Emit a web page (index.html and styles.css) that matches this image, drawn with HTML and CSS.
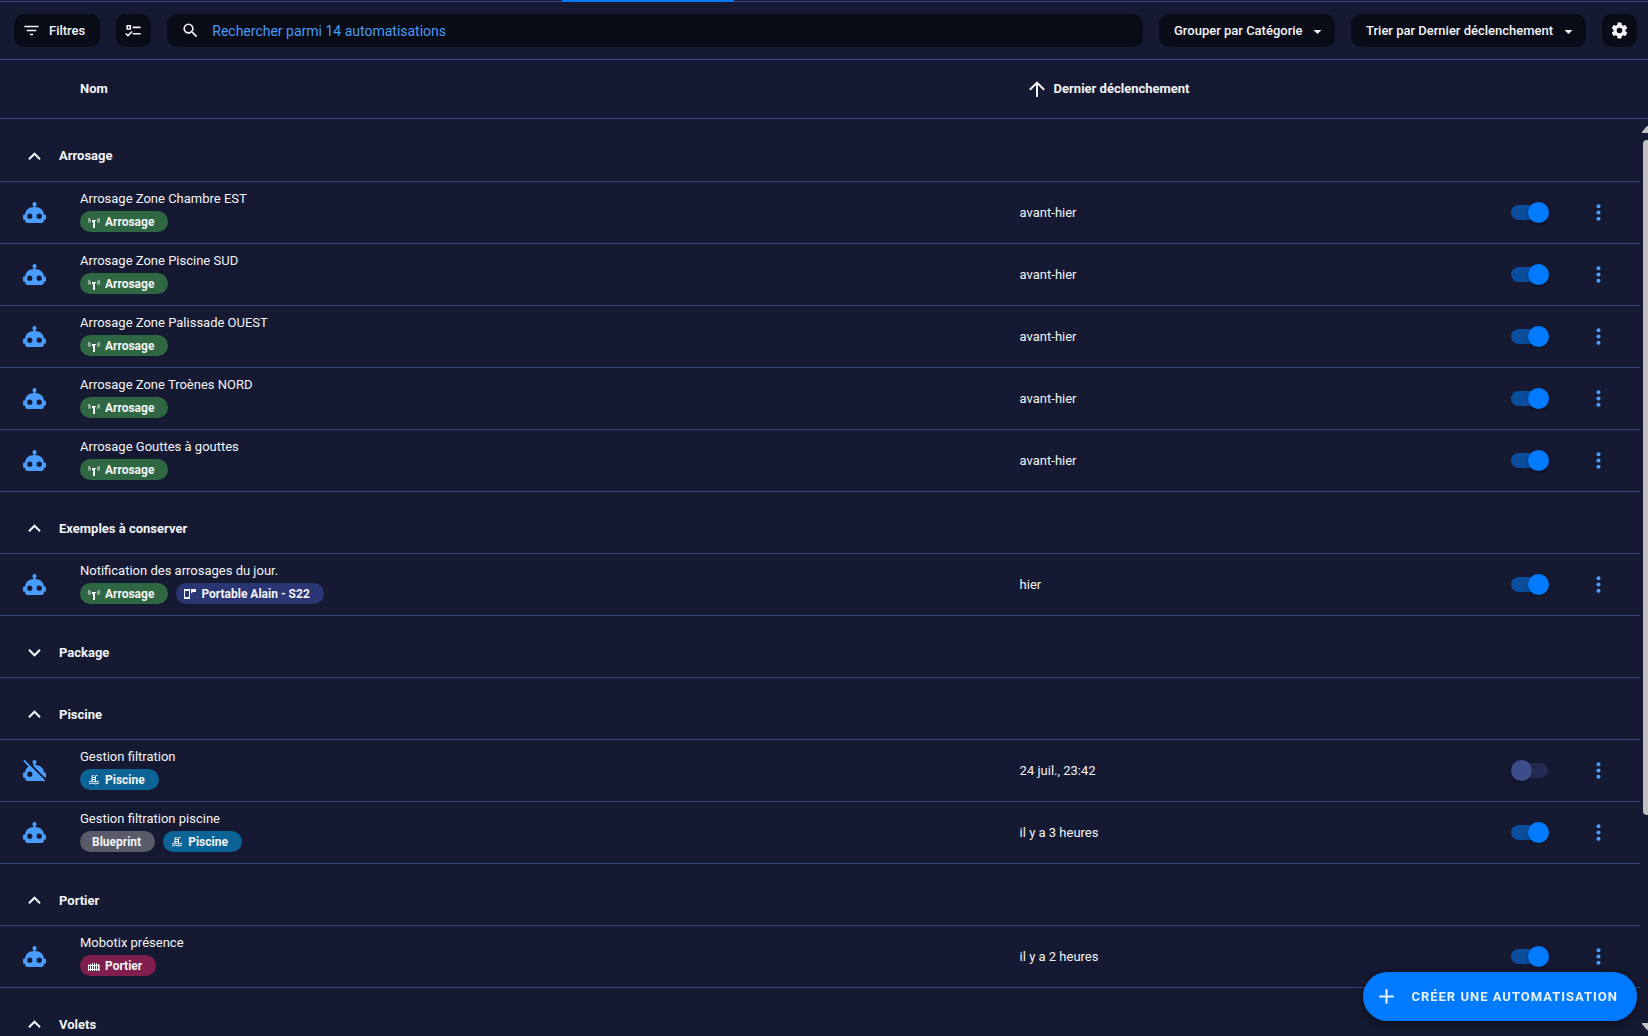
FILE: index.html
```
<!DOCTYPE html>
<html lang="fr">
<head>
    <meta charset="utf-8">
    <title>Automatisations</title>
    <link rel="stylesheet" href="styles.css">
</head>
<body>
    <!-- Shared icons -->
    <svg class="sprite" aria-hidden="true">
        <symbol id="robot" viewBox="0 0 24 24"><path d="M12,2A2,2 0 0,1 14,4C14,4.74 13.6,5.39 13,5.73V7H14A7,7 0 0,1 21,14H22A1,1 0 0,1 23,15V18A1,1 0 0,1 22,19H21V20A2,2 0 0,1 19,22H5A2,2 0 0,1 3,20V19H2A1,1 0 0,1 1,18V15A1,1 0 0,1 2,14H3A7,7 0 0,1 10,7H11V5.73C10.4,5.39 10,4.74 10,4A2,2 0 0,1 12,2M7.5,13A2.5,2.5 0 0,0 5,15.5A2.5,2.5 0 0,0 7.5,18A2.5,2.5 0 0,0 10,15.5A2.5,2.5 0 0,0 7.5,13M16.5,13A2.5,2.5 0 0,0 14,15.5A2.5,2.5 0 0,0 16.5,18A2.5,2.5 0 0,0 19,15.5A2.5,2.5 0 0,0 16.5,13Z"/></symbol>
        <symbol id="robot-off" viewBox="0 0 24 24"><path d="M23,15V18C23,18.5 22.64,18.88 22.17,18.97L10.2,7H11V5.73C10.4,5.39 10,4.74 10,4A2,2 0 0,1 14,4C14,4.74 13.6,5.39 13,5.73V7H14A7,7 0 0,1 21,14H22A1,1 0 0,1 23,15M22.11,21.46L20.84,22.73L19.89,21.78C19.62,21.92 19.32,22 19,22H5A2,2 0 0,1 3,20V19H2A1,1 0 0,1 1,18V15A1,1 0 0,1 2,14H3C3,11.53 4.29,9.36 6.22,8.11L1.11,3L2.39,1.73L22.11,21.46M10,15.5A2.5,2.5 0 0,0 7.5,13A2.5,2.5 0 0,0 5,15.5A2.5,2.5 0 0,0 7.5,18A2.5,2.5 0 0,0 10,15.5Z"/></symbol>
        <symbol id="chevron-up" viewBox="0 0 24 24"><path d="M7.41,15.41L12,10.83L16.59,15.41L18,14L12,8L6,14L7.41,15.41Z"/></symbol>
        <symbol id="chevron-down" viewBox="0 0 24 24"><path d="M7.41,8.58L12,13.17L16.59,8.58L18,10L12,16L6,10L7.41,8.58Z"/></symbol>
        <symbol id="menu-down" viewBox="0 0 24 24"><path d="M7,10L12,15L17,10H7Z"/></symbol>
        <symbol id="dots" viewBox="0 0 24 24"><path d="M12,16A2,2 0 0,1 14,18A2,2 0 0,1 12,20A2,2 0 0,1 10,18A2,2 0 0,1 12,16M12,10A2,2 0 0,1 14,12A2,2 0 0,1 12,14A2,2 0 0,1 10,12A2,2 0 0,1 12,10M12,4A2,2 0 0,1 14,6A2,2 0 0,1 12,8A2,2 0 0,1 10,6A2,2 0 0,1 12,4Z"/></symbol>
        <symbol id="sprinkler" viewBox="0 0 24 24"><path d="M8,8H16V10H14V24H10V12H8ZM4,7H6V9H4ZM4,11H6V13H4ZM2,5H4V7H2ZM2,9H4V11H2ZM0,4H1V14H0ZM18,7H20V9H18ZM18,11H20V13H18ZM20,5H22V7H20ZM20,9H22V11H20ZM23,4H24V14H23Z"/></symbol>
        <symbol id="pool" viewBox="0 0 24 24"><path d="M2,15C3.67,14.25 5.33,13.5 7,13.17V5A3,3 0 0,1 10,2C11.31,2 12.42,2.83 12.83,4H10A1,1 0 0,0 9,5V6H14V5A3,3 0 0,1 17,2C18.31,2 19.42,2.83 19.83,4H17A1,1 0 0,0 16,5V14.94C18,14.62 20,13 22,13V15C19.78,15 17.56,17 15.33,17C13.11,17 10.89,15 8.67,15C6.44,15 4.22,16 2,17V15M14,8H9V10H14V8M14,12H9V13C10.67,13.16 12.33,14.31 14,14.79V12M2,19C4.22,18 6.44,17 8.67,17C10.89,17 13.11,19 15.33,19C17.56,19 19.78,17 22,17V19C19.78,19 17.56,21 15.33,21C13.11,21 10.89,19 8.67,19C6.44,19 4.22,20 2,21V19Z"/></symbol>
        <symbol id="phone-msg" viewBox="0 0 24 24"><path fill-rule="evenodd" d="M0,2H12V22H0ZM2,6V18H10V6ZM14,2H24V8H18L14,11Z"/></symbol>
        <symbol id="gate" viewBox="0 0 24 24"><path d="M0,9H2V22H0ZM4,8H6V22H4ZM8,6H10V22H8ZM12,6H14V22H12ZM16,6H18V22H16ZM20,8H22V22H20ZM0,10H24V12H0ZM0,18H24V20H0ZM23,9H24V22H23Z"/></symbol>
    </svg>

    <div class="tab-strip"><span class="tab-indicator"></span></div>

    <!-- Toolbar -->
    <div class="toolbar">
        <button class="tool filter-button">
            <svg viewBox="0 0 24 24"><path d="M6,13H18V11H6M3,6V8H21V6M10,18H14V16H10V18Z"/></svg>
            Filtres
        </button>
        <button class="tool icon-tool" aria-label="Sélectionner">
            <svg viewBox="0 0 24 24"><path d="M3,5H9V11H3V5M5,7V9H7V7H5M11,7H21V9H11V7M11,15H21V17H11V15M5,20L1.5,16.5L2.91,15.09L5,17.17L9.59,12.59L11,14L5,20Z"/></svg>
        </button>
        <label class="tool search">
            <svg viewBox="0 0 24 24"><path d="M9.5,3A6.5,6.5 0 0,1 16,9.5C16,11.11 15.41,12.59 14.44,13.73L14.71,14H15.5L20.5,19L19,20.5L14,15.5V14.71L13.73,14.44C12.59,15.41 11.11,16 9.5,16A6.5,6.5 0 0,1 3,9.5A6.5,6.5 0 0,1 9.5,3M9.5,5C7,5 5,7 5,9.5C5,12 7,14 9.5,14C12,14 14,12 14,9.5C14,7 12,5 9.5,5Z"/></svg>
            <input type="text" aria-label="Rechercher" placeholder="Rechercher parmi 14 automatisations">
        </label>
        <div class="dropdown">
            <select class="tool" aria-label="Grouper par"><option>Grouper par Catégorie</option></select>
            <svg><use href="#menu-down"/></svg>
        </div>
        <div class="dropdown">
            <select class="tool" aria-label="Trier par"><option>Trier par Dernier déclenchement</option></select>
            <svg><use href="#menu-down"/></svg>
        </div>
        <button class="tool icon-tool" aria-label="Paramètres">
            <svg viewBox="0 0 24 24"><path d="M12,15.5A3.5,3.5 0 0,1 8.5,12A3.5,3.5 0 0,1 12,8.5A3.5,3.5 0 0,1 15.5,12A3.5,3.5 0 0,1 12,15.5M19.43,12.97C19.47,12.65 19.5,12.33 19.5,12C19.5,11.67 19.47,11.34 19.43,11L21.54,9.37C21.73,9.22 21.78,8.95 21.66,8.73L19.66,5.27C19.54,5.05 19.27,4.96 19.05,5.05L16.56,6.05C16.04,5.66 15.5,5.32 14.87,5.07L14.5,2.42C14.46,2.18 14.25,2 14,2H10C9.75,2 9.54,2.18 9.5,2.42L9.13,5.07C8.5,5.32 7.96,5.66 7.44,6.05L4.95,5.05C4.73,4.96 4.46,5.05 4.34,5.27L2.34,8.73C2.21,8.95 2.27,9.22 2.46,9.37L4.57,11C4.53,11.34 4.5,11.67 4.5,12C4.5,12.33 4.53,12.65 4.57,12.97L2.46,14.63C2.27,14.78 2.21,15.05 2.34,15.27L4.34,18.73C4.46,18.95 4.73,19.03 4.95,18.95L7.44,17.94C7.96,18.34 8.5,18.68 9.13,18.93L9.5,21.58C9.54,21.82 9.75,22 10,22H14C14.25,22 14.46,21.82 14.5,21.58L14.87,18.93C15.5,18.67 16.04,18.34 16.56,17.94L19.05,18.95C19.27,19.03 19.54,18.95 19.66,18.73L21.66,15.27C21.78,15.05 21.73,14.78 21.54,14.63L19.43,12.97Z"/></svg>
        </button>
    </div>

    <!-- Automations -->
    <main class="list">
        <table>
            <colgroup>
                <col class="col-icon">
                <col>
                <col class="col-date">
                <col class="col-toggle">
                <col class="col-menu">
                <col class="col-gutter">
            </colgroup>
            <thead>
                <tr>
                    <th></th>
                    <th>Nom</th>
                    <th colspan="4"><span class="sorted"><svg viewBox="0 0 24 24"><path d="M13,20H11V8L5.5,13.5L4.08,12.08L12,4.16L19.92,12.08L18.5,13.5L13,8V20Z"/></svg>Dernier déclenchement</span></th>
                </tr>
            </thead>
            <tbody>
                <tr class="group"><th colspan="5"><button><svg><use href="#chevron-up"/></svg>Arrosage</button></th></tr>
                <tr>
                    <td class="icon"><svg><use href="#robot"/></svg></td>
                    <td class="label"><div>Arrosage Zone Chambre EST</div><div class="chips"><span class="chip green"><svg><use href="#sprinkler"/></svg>Arrosage</span></div></td>
                    <td class="date">avant-hier</td>
                    <td><input type="checkbox" class="toggle" aria-label="Arrosage Zone Chambre EST" checked></td>
                    <td><button class="more" aria-label="Menu"><svg><use href="#dots"/></svg></button></td>
                </tr>
                <tr>
                    <td class="icon"><svg><use href="#robot"/></svg></td>
                    <td class="label"><div>Arrosage Zone Piscine SUD</div><div class="chips"><span class="chip green"><svg><use href="#sprinkler"/></svg>Arrosage</span></div></td>
                    <td class="date">avant-hier</td>
                    <td><input type="checkbox" class="toggle" aria-label="Arrosage Zone Piscine SUD" checked></td>
                    <td><button class="more" aria-label="Menu"><svg><use href="#dots"/></svg></button></td>
                </tr>
                <tr>
                    <td class="icon"><svg><use href="#robot"/></svg></td>
                    <td class="label"><div>Arrosage Zone Palissade OUEST</div><div class="chips"><span class="chip green"><svg><use href="#sprinkler"/></svg>Arrosage</span></div></td>
                    <td class="date">avant-hier</td>
                    <td><input type="checkbox" class="toggle" aria-label="Arrosage Zone Palissade OUEST" checked></td>
                    <td><button class="more" aria-label="Menu"><svg><use href="#dots"/></svg></button></td>
                </tr>
                <tr>
                    <td class="icon"><svg><use href="#robot"/></svg></td>
                    <td class="label"><div>Arrosage Zone Troènes NORD</div><div class="chips"><span class="chip green"><svg><use href="#sprinkler"/></svg>Arrosage</span></div></td>
                    <td class="date">avant-hier</td>
                    <td><input type="checkbox" class="toggle" aria-label="Arrosage Zone Troènes NORD" checked></td>
                    <td><button class="more" aria-label="Menu"><svg><use href="#dots"/></svg></button></td>
                </tr>
                <tr>
                    <td class="icon"><svg><use href="#robot"/></svg></td>
                    <td class="label"><div>Arrosage Gouttes à gouttes</div><div class="chips"><span class="chip green"><svg><use href="#sprinkler"/></svg>Arrosage</span></div></td>
                    <td class="date">avant-hier</td>
                    <td><input type="checkbox" class="toggle" aria-label="Arrosage Gouttes à gouttes" checked></td>
                    <td><button class="more" aria-label="Menu"><svg><use href="#dots"/></svg></button></td>
                </tr>

                <tr class="group"><th colspan="5"><button><svg><use href="#chevron-up"/></svg>Exemples à conserver</button></th></tr>
                <tr>
                    <td class="icon"><svg><use href="#robot"/></svg></td>
                    <td class="label"><div>Notification des arrosages du jour.</div><div class="chips"><span class="chip green"><svg><use href="#sprinkler"/></svg>Arrosage</span><span class="chip indigo"><svg><use href="#phone-msg"/></svg>Portable Alain - S22</span></div></td>
                    <td class="date">hier</td>
                    <td><input type="checkbox" class="toggle" aria-label="Notification des arrosages du jour." checked></td>
                    <td><button class="more" aria-label="Menu"><svg><use href="#dots"/></svg></button></td>
                </tr>

                <tr class="group"><th colspan="5"><button><svg><use href="#chevron-down"/></svg>Package</button></th></tr>

                <tr class="group"><th colspan="5"><button><svg><use href="#chevron-up"/></svg>Piscine</button></th></tr>
                <tr>
                    <td class="icon"><svg><use href="#robot-off"/></svg></td>
                    <td class="label"><div>Gestion filtration</div><div class="chips"><span class="chip blue"><svg><use href="#pool"/></svg>Piscine</span></div></td>
                    <td class="date">24 juil., 23:42</td>
                    <td><input type="checkbox" class="toggle" aria-label="Gestion filtration"></td>
                    <td><button class="more" aria-label="Menu"><svg><use href="#dots"/></svg></button></td>
                </tr>
                <tr>
                    <td class="icon"><svg><use href="#robot"/></svg></td>
                    <td class="label"><div>Gestion filtration piscine</div><div class="chips"><span class="chip plain">Blueprint</span><span class="chip blue"><svg><use href="#pool"/></svg>Piscine</span></div></td>
                    <td class="date">il y a 3 heures</td>
                    <td><input type="checkbox" class="toggle" aria-label="Gestion filtration piscine" checked></td>
                    <td><button class="more" aria-label="Menu"><svg><use href="#dots"/></svg></button></td>
                </tr>

                <tr class="group"><th colspan="5"><button><svg><use href="#chevron-up"/></svg>Portier</button></th></tr>
                <tr>
                    <td class="icon"><svg><use href="#robot"/></svg></td>
                    <td class="label"><div>Mobotix présence</div><div class="chips"><span class="chip crimson"><svg><use href="#gate"/></svg>Portier</span></div></td>
                    <td class="date">il y a 2 heures</td>
                    <td><input type="checkbox" class="toggle" aria-label="Mobotix présence" checked></td>
                    <td><button class="more" aria-label="Menu"><svg><use href="#dots"/></svg></button></td>
                </tr>

                <tr class="group"><th colspan="5"><button><svg><use href="#chevron-up"/></svg>Volets</button></th></tr>
            </tbody>
        </table>

        <div class="scrollbar">
            <svg class="scroll-arrow" viewBox="0 0 6 7"><path d="M0,7V6L5,0H6V7Z"/></svg>
            <div class="scroll-track"><div class="scroll-thumb"></div></div>
            <svg class="scroll-arrow" viewBox="0 0 6 7"><path d="M0,0V1L5,7H6V0Z"/></svg>
        </div>
    </main>

    <button class="fab">
        <svg viewBox="0 0 24 24"><path d="M19,13H13V19H11V13H5V11H11V5H13V11H19V13Z"/></svg>
        CRÉER UNE AUTOMATISATION
    </button>
</body>
</html>
```
FILE: styles.css
```
* { box-sizing: border-box; }
body {
    margin: 0;
    height: 100vh;
    overflow: hidden;
    display: flex;
    flex-direction: column;
    background: #151931;
    color: #f2f4f6;
    font-family: Roboto, sans-serif;
    font-size: 13px;
    line-height: 18px;
}
svg { fill: currentColor; flex: none; display: block; }
button, input, select { font: inherit; color: inherit; }
button { border: none; background: none; padding: 0; cursor: pointer; }
.sprite { position: absolute; width: 0; height: 0; }

.tab-strip {
    position: relative;
    flex: none;
    height: 2px;
    border-bottom: 1px solid #3a4a88;
}
.tab-indicator {
    position: absolute;
    top: 0;
    left: 34.1%;
    width: 172px;
    height: 2px;
    background: #007bff;
}

/* Toolbar */
.toolbar {
    flex: none;
    display: flex;
    align-items: center;
    gap: 16px;
    height: 58px;
    padding: 0 11px 0 14px;
    border-bottom: 1px solid #3a4a88;
}
.tool {
    height: 33px;
    border: none;
    border-radius: 10px;
    background: #090b16;
    font-weight: 500;
}
.filter-button {
    display: flex;
    align-items: center;
    gap: 8px;
    padding: 0 15px 0 8px;
}
.filter-button svg, .icon-tool svg, .search svg { width: 19px; height: 19px; }
.icon-tool {
    display: flex;
    align-items: center;
    justify-content: center;
    width: 35px;
}
.search {
    flex: 1;
    display: flex;
    align-items: center;
    gap: 12px;
    padding: 0 14px;
}
.search input {
    flex: 1;
    padding: 0;
    border: none;
    outline: none;
    background: none;
    font-size: 14px;
    font-weight: 400;
}
.search input::placeholder { color: #4a9bf5; opacity: 1; }
.dropdown { position: relative; }
.dropdown select {
    appearance: none;
    padding: 0 32px 0 15px;
}
.dropdown svg {
    position: absolute;
    right: 8px;
    top: 8px;
    width: 19px;
    height: 19px;
    pointer-events: none;
}

/* Table */
.list {
    position: relative;
    flex: 1;
    min-height: 0;
    overflow: hidden;
}
table {
    width: 100%;
    table-layout: fixed;
    border-collapse: separate;
    border-spacing: 0;
}
.col-icon { width: 80px; }
.col-date { width: 30%; }
.col-toggle { width: 60px; }
.col-menu { width: 69px; }
.col-gutter { width: 8px; }
th, td {
    height: 62px;
    padding: 0;
    border-bottom: 1px solid #33427c;
    text-align: left;
}
thead th { height: 59px; border-color: #3a4a88; font-weight: 700; }
.sorted {
    display: flex;
    align-items: center;
    gap: 5px;
    padding-left: 8px;
}
.sorted svg { width: 24px; height: 24px; }
.group th { padding-top: 12px; }
.group:first-child th { height: 63px; }
.group button {
    display: flex;
    align-items: center;
    gap: 12px;
    padding-left: 22px;
    font-weight: 700;
}
.group svg { width: 25px; height: 25px; }
.icon svg {
    width: 25px;
    height: 25px;
    margin-left: 22px;
    color: #4a9eff;
}
.label { padding-bottom: 3px; }
.date { padding-left: 3px; }

.chips {
    display: flex;
    gap: 8px;
    margin-top: 3px;
}
.chip {
    display: flex;
    align-items: center;
    gap: 5px;
    height: 21px;
    padding: 0 14px 0 8px;
    border-radius: 11px;
    font-size: 12px;
    font-weight: 700;
}
.chip svg { width: 12px; height: 12px; margin-top: 1px; }
.green { background: #2f6742; }
.indigo { background: #2a3573; }
.blue { background: #0b6396; }
.crimson { background: #801e4d; }
.plain { background: #595b69; padding-left: 12px; }

.toggle {
    appearance: none;
    position: relative;
    display: block;
    width: 38px;
    height: 21px;
    margin: 0;
}
.toggle::before {
    content: "";
    position: absolute;
    inset: 3px 1px 3px 0;
    border-radius: 8px;
    background: #232b52;
}
.toggle::after {
    content: "";
    position: absolute;
    top: 0;
    left: 0;
    width: 21px;
    height: 21px;
    border-radius: 50%;
    background: #3d4c8a;
    box-shadow: 0 1px 3px rgba(0, 0, 0, 0.4);
}
.toggle:checked::before { background: #0b4d9d; }
.toggle:checked::after { left: auto; right: 0; background: #007bff; }
.more { display: block; margin-left: 15px; color: #4a9eff; }
.more svg { width: 25px; height: 25px; }

.scrollbar {
    position: absolute;
    top: 66px;
    right: 0;
    bottom: 6px;
    width: 6px;
    display: flex;
    flex-direction: column;
    gap: 7px;
    color: #c1c1c1;
}
.scroll-arrow { width: 6px; height: 7px; }
.scroll-track { flex: 1; }
.scroll-thumb {
    height: 77%;
    margin-left: 1px;
    border-radius: 4px 0 0 4px;
    background: #c1c1c1;
}

.fab {
    position: fixed;
    right: 11px;
    bottom: 15px;
    display: flex;
    align-items: center;
    gap: 12px;
    height: 49px;
    padding: 0 19px 0 11px;
    border-radius: 25px;
    background: #007bff;
    color: #e8f2ff;
    font-weight: 700;
    letter-spacing: 1px;
    box-shadow: 0 3px 8px rgba(0, 0, 0, 0.4);
}
.fab svg { width: 25px; height: 25px; }
```
